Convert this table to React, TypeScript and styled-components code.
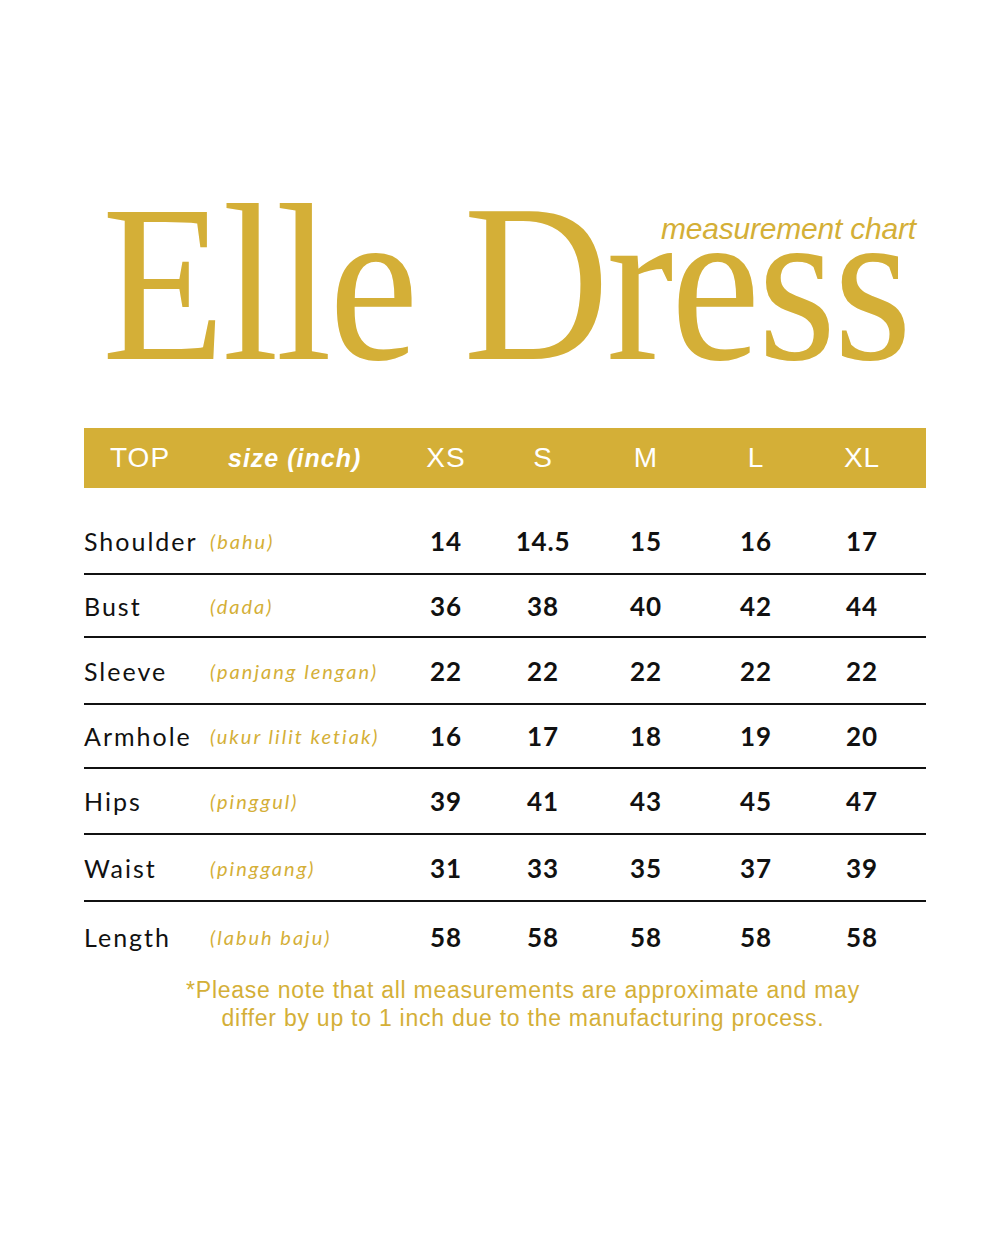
import styled, { createGlobalStyle } from "styled-components";

const GOLD = "#d4af37";

const GlobalStyle = createGlobalStyle`
  * { box-sizing: border-box; }
  html, body {
    margin: 0;
    padding: 0;
    background: #ffffff;
  }
`;

const Page = styled.div`
  width: 1000px;
  height: 1250px;
  background: #ffffff;
  display: flex;
  flex-direction: column;
  padding: 170px 74px 0 84px;
  font-family: Lato, "Open Sans", sans-serif;
`;

const Title = styled.div`
  position: relative;
  height: 225px;
  padding-left: 18px;
`;

const BigName = styled.h1`
  margin: 0;
  font-family: "Liberation Serif", "Times New Roman", serif;
  font-weight: 400;
  font-size: 224px;
  line-height: 226px;
  color: ${GOLD};
  letter-spacing: -3px;
  white-space: nowrap;
  transform: scaleX(0.9);
  transform-origin: left top;
`;

const Tagline = styled.span`
  position: absolute;
  right: 10px;
  top: 42px;
  font-family: "Liberation Sans", Arial, sans-serif;
  font-style: italic;
  font-weight: 400;
  font-size: 30px;
  color: ${GOLD};
  letter-spacing: -0.2px;
`;

const Table = styled.div`
  margin-top: 33px;
  width: 842px;
  display: grid;
  grid-template-columns: 126px 185px 102px 92px 114px 106px 106px 11px;
`;

const HeaderBand = styled.div`
  grid-column: 1 / -1;
  display: grid;
  grid-template-columns: subgrid;
  height: 60px;
  align-items: center;
  background: ${GOLD};
  color: #ffffff;
  font-family: "Liberation Sans", Arial, sans-serif;
  font-size: 28px;
  margin-bottom: 21px;
`;

const HeadCell = styled.div<{ $italic?: boolean; $indent?: number }>`
  text-align: ${(p) => (p.$indent !== undefined ? "left" : "center")};
  padding-left: ${(p) => p.$indent ?? 0}px;
  font-style: ${(p) => (p.$italic ? "italic" : "normal")};
  font-weight: ${(p) => (p.$italic ? 700 : 400)};
  font-size: ${(p) => (p.$italic ? 25 : 28)}px;
  letter-spacing: ${(p) => (p.$italic ? 1 : 1)}px;
  white-space: nowrap;
`;

const Row = styled.div<{ $last?: boolean; $h: number }>`
  grid-column: 1 / -1;
  display: grid;
  grid-template-columns: subgrid;
  align-items: center;
  height: ${(p) => p.$h}px;
  border-bottom: ${(p) => (p.$last ? "none" : "2px solid #111")};
`;

const Label = styled.div`
  font-size: 25px;
  color: #111;
  letter-spacing: 2px;
  white-space: nowrap;
`;

const SubLabel = styled.div`
  font-size: 20px;
  font-style: italic;
  color: ${GOLD};
  letter-spacing: 2px;
  white-space: nowrap;
`;

const Value = styled.div`
  text-align: center;
  font-size: 26px;
  font-weight: 700;
  color: #111;
  letter-spacing: 0.8px;
`;

const Note = styled.p`
  margin: 4px 0 0;
  width: 842px;
  padding-left: 36px;
  text-align: center;
  font-family: "Liberation Sans", Arial, sans-serif;
  font-size: 23px;
  line-height: 28px;
  color: ${GOLD};
  letter-spacing: 0.75px;
`;

const sizes = ["XS", "S", "M", "L", "XL"];

const rows = [
  { label: "Shoulder", sub: "(bahu)", values: ["14", "14.5", "15", "16", "17"], h: 66 },
  { label: "Bust", sub: "(dada)", values: ["36", "38", "40", "42", "44"], h: 63 },
  { label: "Sleeve", sub: "(panjang lengan)", values: ["22", "22", "22", "22", "22"], h: 67 },
  { label: "Armhole", sub: "(ukur lilit ketiak)", values: ["16", "17", "18", "19", "20"], h: 64 },
  { label: "Hips", sub: "(pinggul)", values: ["39", "41", "43", "45", "47"], h: 66 },
  { label: "Waist", sub: "(pinggang)", values: ["31", "33", "35", "37", "39"], h: 67 },
  { label: "Length", sub: "(labuh baju)", values: ["58", "58", "58", "58", "58"], h: 70 },
];

export default function App() {
  return (
    <Page>
      <GlobalStyle />
      <Title>
        <BigName>Elle Dress</BigName>
        <Tagline>measurement chart</Tagline>
      </Title>

      <Table>
        <HeaderBand>
          <HeadCell $indent={26}>TOP</HeadCell>
          <HeadCell $italic $indent={18}>size (inch)</HeadCell>
          {sizes.map((s) => (
            <HeadCell key={s}>{s}</HeadCell>
          ))}
          <div />
        </HeaderBand>

        {rows.map((r, i) => (
          <Row key={r.label} $h={r.h} $last={i === rows.length - 1}>
            <Label>{r.label}</Label>
            <SubLabel>{r.sub}</SubLabel>
            {r.values.map((v, j) => (
              <Value key={j}>{v}</Value>
            ))}
            <div />
          </Row>
        ))}
      </Table>

      <Note>
        *Please note that all measurements are approximate and may
        <br />
        differ by up to 1 inch due to the manufacturing process.
      </Note>
    </Page>
  );
}
